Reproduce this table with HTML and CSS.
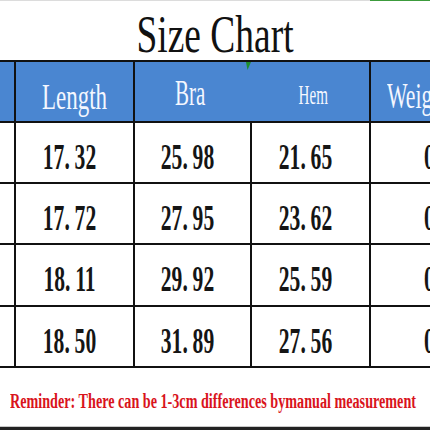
FILE: index.html
```html
<!DOCTYPE html>
<html>
<head>
<meta charset="utf-8">
<link rel="stylesheet" href="styles.css">
</head>
<body>
<div class="page">
  <div class="topline"><div class="topline-gray"></div><div class="topline-green"></div></div>
  <h1 class="title"><span class="title-text">Size Chart</span></h1>
  <div class="chart">
    <div class="hcell"></div>
    <div class="hcell hcell-length"><span class="ht ht-length">Length</span></div>
    <div class="hcell hcell-pair">
      <span class="hhalf hhalf-bra"><span class="ht ht-bra">Bra</span></span>
      <span class="hhalf hhalf-hem"><span class="marker"></span><span class="ht ht-hem">Hem</span></span>
    </div>
    <div class="hcell hcell-weight"><span class="ht ht-weight">Weight</span></div>

    <div class="cell"></div>
    <div class="cell"><span class="num">17<span class="dot">.</span>32</span></div>
    <div class="cell"><span class="num">25<span class="dot">.</span>98</span></div>
    <div class="cell"><span class="num">21<span class="dot">.</span>65</span></div>
    <div class="cell cell-weight"><span class="num">0<span class="dot">.</span>50</span></div>

    <div class="cell"></div>
    <div class="cell"><span class="num">17<span class="dot">.</span>72</span></div>
    <div class="cell"><span class="num">27<span class="dot">.</span>95</span></div>
    <div class="cell"><span class="num">23<span class="dot">.</span>62</span></div>
    <div class="cell cell-weight"><span class="num">0<span class="dot">.</span>55</span></div>

    <div class="cell"></div>
    <div class="cell"><span class="num">18<span class="dot">.</span>11</span></div>
    <div class="cell"><span class="num">29<span class="dot">.</span>92</span></div>
    <div class="cell"><span class="num">25<span class="dot">.</span>59</span></div>
    <div class="cell cell-weight"><span class="num">0<span class="dot">.</span>60</span></div>

    <div class="cell"></div>
    <div class="cell"><span class="num">18<span class="dot">.</span>50</span></div>
    <div class="cell"><span class="num">31<span class="dot">.</span>89</span></div>
    <div class="cell"><span class="num">27<span class="dot">.</span>56</span></div>
    <div class="cell cell-weight"><span class="num">0<span class="dot">.</span>65</span></div>
  </div>
  <p class="note"><span class="note-text">Reminder: There can be 1-3cm differences bymanual measurement</span></p>
  <div class="bottomline"></div>
</div>
</body>
</html>
```

FILE: styles.css
```css
html, body {
  margin: 0;
  padding: 0;
  background: #fff;
}

.page {
  width: 430px;
  height: 430px;
  overflow: hidden;
  display: flex;
  flex-direction: column;
  background: #fff;
}

.topline {
  display: flex;
  height: 1px;
  flex: none;
}

.topline-gray {
  width: 370px;
  background: #dcdcdc;
}

.topline-green {
  flex: 1;
  background: #3c9b3c;
}

.title {
  margin: 0;
  flex: none;
  height: 59px;
  box-sizing: border-box;
  padding-top: 8px;
  font: 400 52px/51px "Liberation Serif", serif;
  color: #111;
  text-align: center;
  white-space: nowrap;
}

.title-text {
  display: inline-block;
  transform: scaleX(0.72);
}

.chart {
  flex: none;
  display: grid;
  grid-template-columns: 14px 117px 115px 117px 120px;
  grid-template-rows: 59px 59px 59px 60px 59px;
  gap: 2px;
  padding: 2px 0;
  background: #111;
}

.hcell {
  background: #4a86d1;
  color: #f4f7ff;
  font: 400 35px/35px "Liberation Serif", serif;
  display: flex;
  justify-content: center;
  align-items: flex-start;
  white-space: nowrap;
  overflow: hidden;
}

.ht {
  display: inline-block;
}

.hcell-length {
  padding-top: 18px;
}

.ht-length {
  transform: scaleX(0.656);
}

.hcell-pair {
  grid-column: span 2;
  justify-content: flex-start;
}

.hhalf {
  display: flex;
  justify-content: center;
  align-items: flex-start;
}

.hhalf-bra {
  width: 117px;
  padding-top: 14px;
}

.ht-bra {
  transform: scaleX(0.6);
}

.hhalf-hem {
  position: relative;
  width: 117px;
  padding-top: 20px;
  padding-left: 12px;
  font-size: 27px;
  line-height: 27px;
}

.ht-hem {
  transform: scaleX(0.56);
}

.marker {
  position: absolute;
  left: 0;
  top: 0;
  width: 5px;
  height: 8px;
  background: #1f8f2f;
  clip-path: polygon(0 0, 100% 0, 30% 100%);
}

.hcell-weight {
  justify-content: flex-start;
  padding-top: 17px;
  padding-left: 16px;
}

.ht-weight {
  transform: scaleX(0.62);
  transform-origin: left center;
}

.cell {
  background: #fff;
  color: #151515;
  font: 700 36px/35px "Liberation Serif", serif;
  display: flex;
  justify-content: center;
  align-items: flex-start;
  padding: 17px 10px 0 0;
  white-space: nowrap;
  overflow: hidden;
}

.num {
  display: inline-block;
  transform: scaleX(0.6);
}

.dot {
  margin-right: 8px;
}

.cell-weight {
  justify-content: flex-start;
  padding-left: 53px;
  padding-right: 0;
}

.cell-weight .num {
  transform-origin: left center;
}

.note {
  margin: 0;
  flex: 1;
  padding: 23px 0 0 10px;
  font: 700 20px/20px "Liberation Serif", serif;
  color: #d9141c;
  white-space: nowrap;
}

.note-text {
  display: inline-block;
  transform: scaleX(0.708);
  transform-origin: left center;
}

.bottomline {
  flex: none;
  height: 3px;
  background: #222;
  border-top: 1px solid #c8c8c8;
}
```
